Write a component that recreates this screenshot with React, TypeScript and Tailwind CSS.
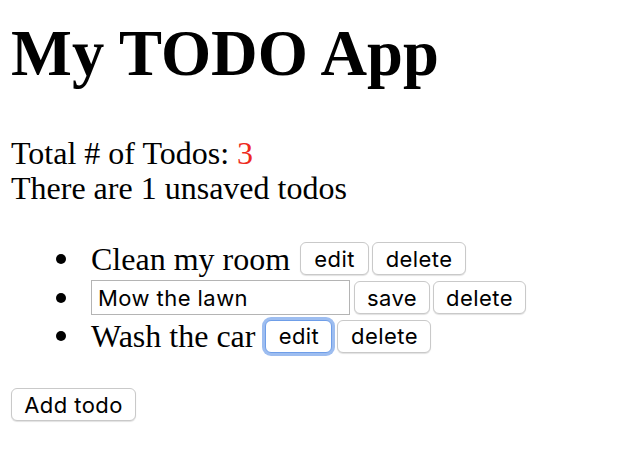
import { useState } from 'react'

type Todo = { id: number; text: string; editing: boolean }

const btn =
  "h-[33px] rounded-[6px] border border-[#c9c9c9] bg-white text-[22px] leading-none tracking-[0.02em] text-black shadow-[0_1px_1px_rgba(0,0,0,0.12)] [font-family:Inter,'Liberation_Sans',sans-serif]"

function Bullet() {
  return <span className="absolute left-[-35px] top-1/2 -mt-[5px] h-[10px] w-[10px] rounded-full bg-black" />
}

export default function App() {
  const [todos] = useState<Todo[]>([
    { id: 1, text: 'Clean my room', editing: false },
    { id: 2, text: 'Mow the lawn', editing: true },
    { id: 3, text: 'Wash the car', editing: false },
  ])

  return (
    <div className="min-h-screen bg-white pl-[11px] text-black [font-family:'Liberation_Serif',serif]">
      <h1 className="pt-[17px] text-[64.5px] font-bold leading-[74px]">My TODO App</h1>

      <div className="mt-[45px] text-[32px] leading-[35px]">
        <div>
          Total # of Todos: <span className="text-[#ee2a20]">3</span>
        </div>
        <div>There are 1 unsaved todos</div>
      </div>

      <ul className="mt-[34px] pl-[80px]">
        <li className="relative flex h-[37px] items-center text-[32px]">
          <Bullet />
          <span>{todos[0].text}</span>
          <button className={`${btn} ml-[10px] w-[69px]`}>edit</button>
          <button className={`${btn} ml-[3px] w-[94px]`}>delete</button>
        </li>
        <li className="relative flex h-[41px] items-center">
          <Bullet />
          <input
            defaultValue={todos[1].text}
            className="h-[35px] w-[259px] border border-[#b4b4b4] px-[6px] text-[22px] tracking-[0.02em] outline-none [font-family:Inter,'Liberation_Sans',sans-serif]"
          />
          <button className={`${btn} ml-[4px] w-[76px]`}>save</button>
          <button className={`${btn} ml-[3px] w-[93px]`}>delete</button>
        </li>
        <li className="relative flex h-[36px] items-center text-[32px]">
          <Bullet />
          <span>{todos[2].text}</span>
          <button className={`${btn} ml-[10px] w-[67px] !border-[#6f9ee8] ring-[3px] ring-[#9dbdf0]`}>edit</button>
          <button className={`${btn} ml-[5px] w-[94px]`}>delete</button>
        </li>
      </ul>

      <button className={`${btn} mt-[34px] w-[125px]`}>Add todo</button>
    </div>
  )
}
